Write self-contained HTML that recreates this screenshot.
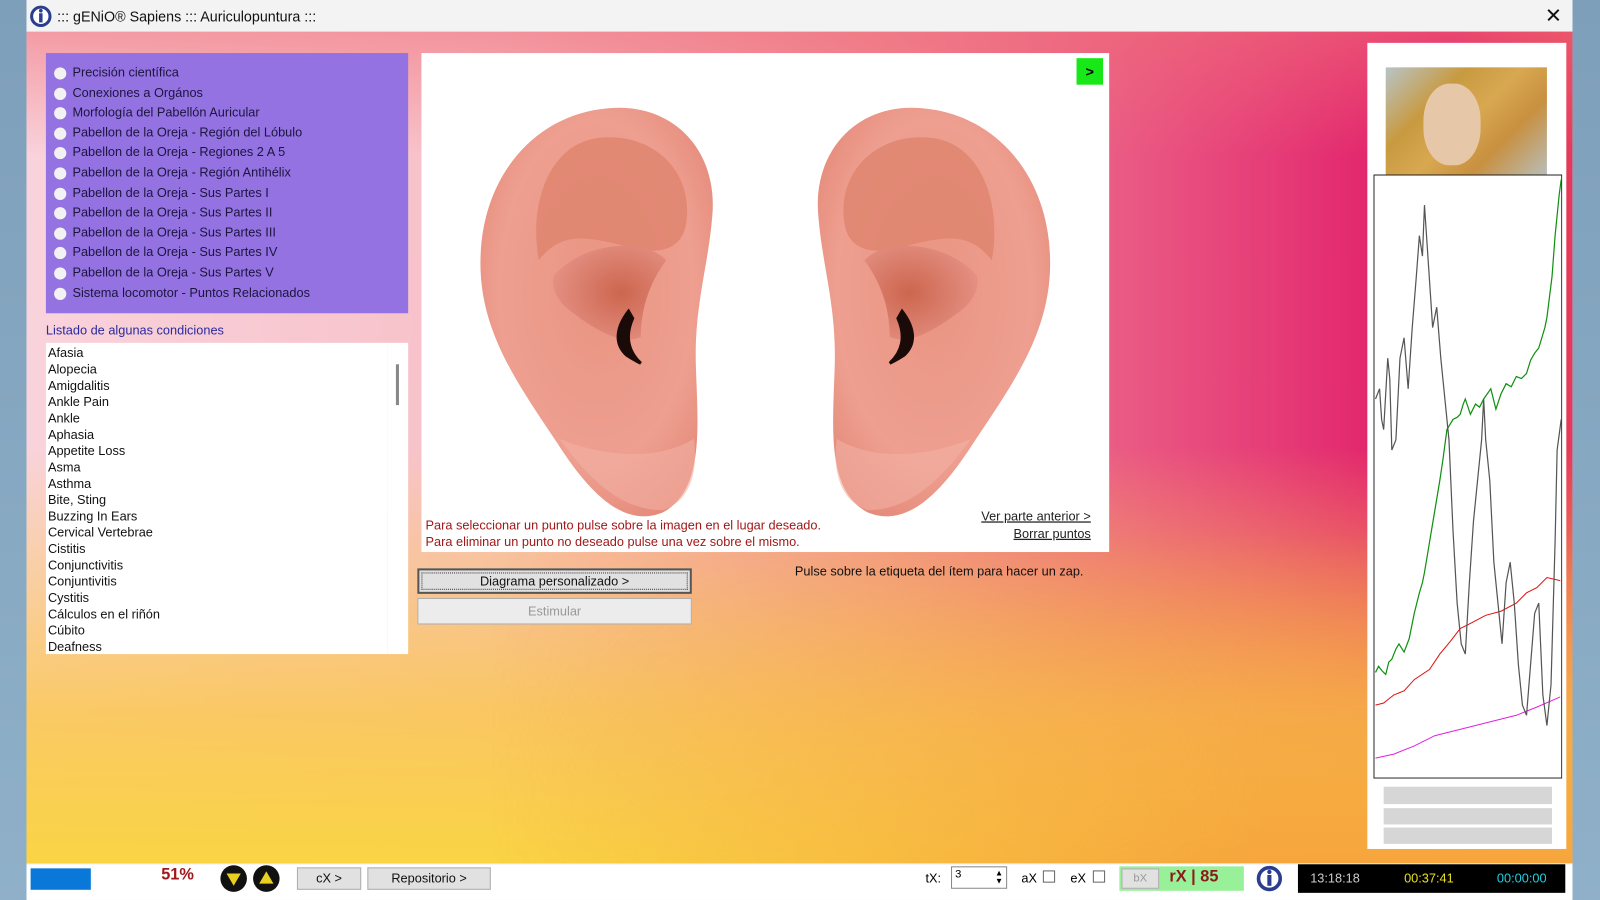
<!DOCTYPE html>
<html><head><meta charset="utf-8"><style>
*{margin:0;padding:0;box-sizing:border-box}
body{width:1600px;height:900px;overflow:hidden;background:linear-gradient(180deg,#7e9fba,#8fb0c8);font-family:"Liberation Sans","DejaVu Sans",sans-serif;position:relative}
#root{position:absolute;left:0;top:0;width:1568px;height:882px;transform:scale(1.0204);transform-origin:0 0}
.win{position:absolute;left:26px;top:0;width:1515px;height:882px;background:#fff}
.title{position:absolute;left:0;top:0;width:1515px;height:31px;background:#f3f3f3;font-size:14px;color:#111}
.client{position:absolute;left:0;top:31px;width:1515px;height:815px;
background:
linear-gradient(180deg,rgba(240,110,120,.55) 0%,rgba(240,120,130,0) 15%),
linear-gradient(0deg,rgba(250,212,68,1) 0%,rgba(250,200,80,.85) 18%,rgba(248,180,120,0) 50%),
linear-gradient(90deg,#f9d3dc 0%,#f7c0c8 30%,#f08a98 55%,#e63e78 80%,#e01566 92%,#e53a5a 100%);}
.ov{position:absolute;left:0;top:0;right:0;bottom:0;background:linear-gradient(0deg,rgba(245,160,60,.9) 0%,rgba(240,120,60,0) 40%);-webkit-mask:linear-gradient(90deg,transparent 30%,#000 80%);mask:linear-gradient(90deg,transparent 30%,#000 80%)}
.abs{position:absolute}
.radio{position:absolute;left:19px;top:21px;width:355px;height:255px;background:#9472e2;padding-top:10px}
.radio div{height:19.6px;font-size:12.5px;color:#1c1540;padding-left:26px;position:relative;line-height:19px}
.radio div:before{content:"";position:absolute;left:8px;top:4px;width:12px;height:12px;border-radius:50%;background:#f2f2f2}
.list{position:absolute;left:19px;top:305px;width:335px;height:305px;background:#fff;font-size:12.5px;color:#111;padding:2px 0 0 2px;line-height:16px;overflow:hidden}
.btn{position:absolute;background:#e1e1e1;border:1px solid #adadad;font-size:12.5px;text-align:center;color:#111}
</style></head><body>
<div id="root">
<div class="win">
<div class="title">
<svg class="abs" style="left:3px;top:5px" width="22" height="22" viewBox="0 0 22 22"><circle cx="11" cy="11" r="9" fill="#fff" stroke="#2a3d8f" stroke-width="3"/><rect x="9.3" y="8" width="3.4" height="9" fill="#2a3d8f"/><circle cx="11" cy="5.5" r="1.8" fill="#2a3d8f"/></svg>
<span class="abs" style="left:30px;top:8px">::: gENiO® Sapiens ::: Auriculopuntura :::</span>
<span class="abs" style="left:1488px;top:3px;font-size:20px">✕</span>
</div>
<div class="client">
<div class="ov"></div>
<div class="radio">
<div>Precisión científica</div><div>Conexiones a Orgános</div><div>Morfología del Pabellón Auricular</div><div>Pabellon de la Oreja - Región del Lóbulo</div><div>Pabellon de la Oreja - Regiones 2 A 5</div><div>Pabellon de la Oreja - Región Antihélix</div><div>Pabellon de la Oreja - Sus Partes I</div><div>Pabellon de la Oreja - Sus Partes II</div><div>Pabellon de la Oreja - Sus Partes III</div><div>Pabellon de la Oreja - Sus Partes IV</div><div>Pabellon de la Oreja - Sus Partes V</div><div>Sistema locomotor - Puntos Relacionados</div>
</div>
<div class="abs" style="left:19px;top:286px;font-size:12.5px;color:#2a2aa0">Listado de algunas condiciones</div>
<div class="list">Afasia<br>Alopecia<br>Amigdalitis<br>Ankle Pain<br>Ankle<br>Aphasia<br>Appetite Loss<br>Asma<br>Asthma<br>Bite, Sting<br>Buzzing In Ears<br>Cervical Vertebrae<br>Cistitis<br>Conjunctivitis<br>Conjuntivitis<br>Cystitis<br>Cálculos en el riñón<br>Cúbito<br>Deafness</div>
<div class="abs" style="left:354px;top:305px;width:20px;height:305px;background:#fff"></div>
<div class="abs" style="left:362px;top:326px;width:3px;height:40px;background:#888"></div>

<div class="abs" style="left:387px;top:21px;width:674px;height:489px;background:#fff">
<svg width="674" height="489" viewBox="413 52 674 489" style="position:absolute;left:0;top:0">
<defs>
<radialGradient id="eg" cx="0.5" cy="0.45" r="0.6"><stop offset="0" stop-color="#e99482"/><stop offset="0.7" stop-color="#ee9f90"/><stop offset="1" stop-color="#e58b7b"/></radialGradient>
<radialGradient id="cg" cx="0.6" cy="0.5" r="0.6"><stop offset="0" stop-color="#cc664e"/><stop offset="1" stop-color="#e48f82"/></radialGradient>
<g id="ear">
<path d="M610 106 C674 101 716 150 710 212 C706 262 692 300 694 360 C696 420 702 480 662 502 C624 518 590 484 558 434 C518 374 480 322 483 250 C486 170 538 111 610 106 Z" fill="url(#eg)"/>
<path d="M600 135 C650 130 690 165 685 215 C682 250 650 250 620 240 C580 230 560 230 540 255 C530 200 550 140 600 135 Z" fill="#dd806a" opacity=".7"/>
<path d="M555 270 C580 240 640 230 665 255 C650 275 640 300 640 330 C620 340 590 320 565 300 C556 290 552 280 555 270 Z" fill="url(#cg)"/>
<path d="M628 305 C618 318 612 335 626 348 C632 352 636 354 640 356 C628 345 624 330 632 312 Z" fill="#1a0a08" stroke="#1a0a08" stroke-width="3"/>
<path d="M560 430 C590 470 620 500 662 500 C690 490 696 460 692 430 C660 450 610 450 560 430 Z" fill="#f2b0a4" opacity=".6"/>
</g>
</defs>
<use href="#ear" transform="translate(-12,0)"/>
<use href="#ear" transform="translate(1512,0) scale(-1,1)"/>
<rect x="1055" y="57" width="26" height="26" fill="#18e818"/>
<text x="1068" y="75" font-size="14" text-anchor="middle" font-family="Liberation Sans" font-weight="bold" fill="#000">&gt;</text>
<text x="417" y="519" font-size="12.5" fill="#a01818" font-family="Liberation Sans">Para seleccionar un punto pulse sobre la imagen en el lugar deseado.</text>
<text x="417" y="535" font-size="12.5" fill="#a01818" font-family="Liberation Sans">Para eliminar un punto no deseado pulse una vez sobre el mismo.</text>
<text x="1069" y="510" font-size="12.5" fill="#222" text-anchor="end" text-decoration="underline" font-family="Liberation Sans">Ver parte anterior &gt;</text>
<text x="1069" y="527" font-size="12.5" fill="#222" text-anchor="end" text-decoration="underline" font-family="Liberation Sans">Borrar puntos</text>
</svg></div>
<div class="btn" style="left:383px;top:526px;width:269px;height:25px;line-height:22px;border:2px solid #555;outline:1px dotted #333;outline-offset:-5px">Diagrama personalizado &gt;</div>
<div class="btn" style="left:383px;top:555px;width:269px;height:26px;line-height:24px;color:#999;background:#ececec">Estimular</div>
<div class="abs" style="left:753px;top:522px;font-size:12.5px;color:#111">Pulse sobre la etiqueta del ítem para hacer un zap.</div>

<div class="abs" style="left:1314px;top:11px;width:195px;height:790px;background:#fff">
<div class="abs" style="left:18px;top:24px;width:158px;height:110px;background:linear-gradient(135deg,#b8c4c8 0%,#c89a40 30%,#d8a850 50%,#c89040 70%,#b8c0c0 100%)"></div>
<div class="abs" style="left:55px;top:40px;width:56px;height:80px;border-radius:45%;background:#e6c8a8"></div>
<svg class="abs" style="left:6px;top:129px" width="185" height="592" viewBox="0 0 185 592">
<rect x="0.5" y="0.5" width="184" height="591" fill="#fff" stroke="#222"/>
<polyline fill="none" stroke="#e020e0" stroke-width="1" points="2,572 20,568 40,560 60,550 80,545 100,540 120,535 140,530 160,522 183,512"/>
<polyline fill="none" stroke="#e01010" stroke-width="1" points="2,520 10,518 20,510 30,506 40,495 55,485 65,470 75,458 85,445 95,440 110,432 125,428 140,420 150,410 160,405 170,395 183,398"/>
<polyline fill="none" stroke="#109010" stroke-width="1.2" points="2,488 5,482 8,486 12,490 15,478 18,475 22,465 25,460 30,468 35,455 38,440 40,430 45,410 48,400 50,390 55,360 60,330 65,300 68,280 72,250 75,245 78,240 82,238 85,235 88,225 90,220 95,235 100,225 104,228 108,220 115,210 120,230 125,215 130,205 135,208 140,198 145,200 150,195 154,182 158,175 162,170 165,160 168,150 170,140 175,100 178,60 182,20 184,5"/>
<polyline fill="none" stroke="#555" stroke-width="1.2" points="2,220 6,210 8,240 10,250 14,180 16,200 18,270 22,260 24,220 26,180 30,160 34,210 38,150 42,100 45,60 48,80 50,30 54,90 58,150 62,130 66,180 70,220 74,260 78,350 82,420 86,460 90,470 94,400 98,340 102,300 106,260 108,220 110,260 114,300 118,380 122,420 126,460 130,400 134,380 138,420 142,480 146,520 150,530 154,480 158,430 162,420 166,510 170,540 174,500 178,360 180,270 184,240"/>
</svg>
<div class="abs" style="left:16px;top:729px;width:165px;height:17px;background:#d6d6d6"></div>
<div class="abs" style="left:16px;top:750px;width:165px;height:16px;background:#d6d6d6"></div>
<div class="abs" style="left:16px;top:769px;width:165px;height:16px;background:#d6d6d6"></div>
</div>
</div>

<div class="abs" style="left:0;top:846px;width:1515px;height:34px;background:#fff;border-top:1px solid #ddd"></div>
<div class="abs" style="left:4px;top:851px;width:59px;height:21px;background:#0a78d8"></div>
<div class="abs" style="left:132px;top:849px;font-size:16px;font-weight:bold;color:#a01818">51%</div>
<svg class="abs" style="left:188px;top:846px" width="64" height="30"><circle cx="15" cy="15" r="13" fill="#111"/><path d="M8 10h14l-7 12z" fill="#e8d020"/><circle cx="47" cy="15" r="13" fill="#111"/><path d="M40 20h14l-7-12z" fill="#e8d020"/></svg>
<div class="btn" style="left:265px;top:850px;width:63px;height:22px;line-height:20px">cX &gt;</div>
<div class="btn" style="left:334px;top:850px;width:121px;height:22px;line-height:20px">Repositorio &gt;</div>
<div class="abs" style="left:881px;top:854px;font-size:12.5px">tX:</div>
<div class="abs" style="left:906px;top:849px;width:55px;height:22px;border:1px solid #888;background:#fff;font-size:11px;padding:1px 3px">3<span style="position:absolute;right:3px;top:2px;font-size:8px;line-height:8px">▲<br>▼</span></div>
<div class="abs" style="left:975px;top:854px;font-size:12.5px">aX</div>
<div class="abs" style="left:996px;top:853px;width:12px;height:12px;border:1px solid #666"></div>
<div class="abs" style="left:1023px;top:854px;font-size:12.5px">eX</div>
<div class="abs" style="left:1045px;top:853px;width:12px;height:12px;border:1px solid #666"></div>
<div class="abs" style="left:1071px;top:849px;width:122px;height:24px;background:#98f098"></div>
<div class="btn" style="left:1073px;top:851px;width:37px;height:20px;line-height:18px;color:#999;font-size:11px">bX</div>
<div class="abs" style="left:1120px;top:851px;font-size:16px;font-weight:bold;color:#8b1a1a">rX | 85</div>
<svg class="abs" style="left:1205px;top:848px" width="26" height="26" viewBox="0 0 22 22"><circle cx="11" cy="11" r="9" fill="#fff" stroke="#2a3d8f" stroke-width="3"/><rect x="9.3" y="8" width="3.4" height="9" fill="#2a3d8f"/><circle cx="11" cy="5.5" r="1.8" fill="#2a3d8f"/></svg>
<div class="abs" style="left:1246px;top:847px;width:262px;height:28px;background:#000;font-size:12.5px;line-height:28px">
<span class="abs" style="left:12px;color:#ccc">13:18:18</span><span class="abs" style="left:104px;color:#e8e020">00:37:41</span><span class="abs" style="left:195px;color:#20d0e0">00:00:00</span></div>
</div>
</div>
</body></html>
